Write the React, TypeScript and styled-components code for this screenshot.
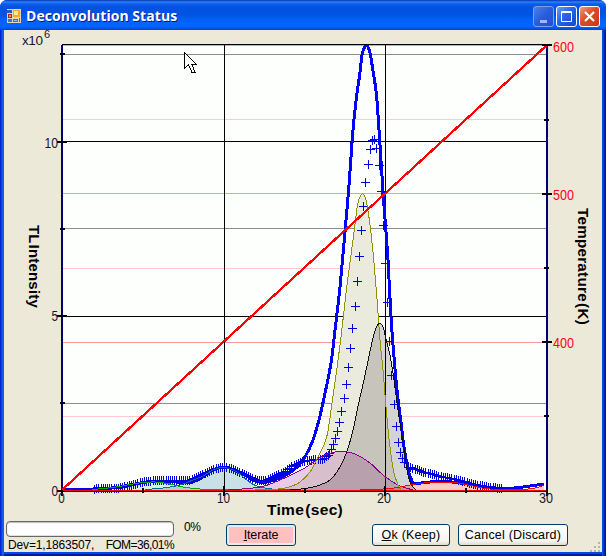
import React from 'react';
import styled, { createGlobalStyle } from 'styled-components';

const GlobalStyle = createGlobalStyle`
  body { margin: 0; background: #fff; overflow: hidden; }
  * { box-sizing: border-box; }
`;

const Window = styled.div`
  width: 606px;
  height: 556px;
  display: flex;
  flex-direction: column;
  border-radius: 7px 7px 0 0;
  overflow: hidden;
  background: linear-gradient(90deg, #0019cf 0, #0831d9 1px, #166aee 3px, #0855dd 4px, #0855dd 602px, #0441d8 603px, #001ea0 605px, #00138c 606px);
  font-family: 'Liberation Sans', Arial, sans-serif;
`;

const TitleBar = styled.header`
  height: 30px;
  flex: none;
  display: flex;
  align-items: center;
  padding: 2px 6px 0 7px;
  background: linear-gradient(180deg, #0831b8 0, #2a82f5 2px, #0a5cec 4px, #0252e0 8px, #0054e3 15px, #0262fa 20px, #0066ff 26px, #005cf0 28px, #0040c8 30px);
`;

const Title = styled.h1`
  margin: 0 auto 0 5px;
  font: bold 14px 'Open Sans', sans-serif;
  line-height: 18px;
  letter-spacing: 0.05px;
  color: #fff;
  text-shadow: 1px 1px 0 #0a1883;
`;

const CaptionButton = styled.button<{ $tone: 'dim' | 'blue' | 'red' }>`
  width: 21px;
  height: 21px;
  margin-left: 2px;
  padding: 0;
  display: grid;
  place-items: center;
  border: 1px solid ${p => (p.$tone === 'dim' ? '#7f9cec' : '#fff')};
  border-radius: 3px;
  background: ${p => p.$tone === 'red'
    ? 'linear-gradient(135deg, #f09a80, #dc4c24 45%, #c63a10)'
    : p.$tone === 'blue'
      ? 'linear-gradient(135deg, #6c9cf8, #2763e8 45%, #1048c8)'
      : 'linear-gradient(135deg, #5080e8, #285cdc 50%, #2050d0)'};
`;

const Client = styled.main`
  flex: 1;
  min-height: 0;
  margin: 0 4px 4px;
  display: flex;
  flex-direction: column;
  background: #ece9d8;
  box-shadow: 0 2px 0 #0848e0, 0 4px 0 #001a9c;
`;

const Chart = styled.svg`
  display: block;
  width: 598px;
  height: 488px;
  flex: none;
  font-family: 'Liberation Sans', Arial, sans-serif;
`;

const Footer = styled.footer`
  height: 34px;
  display: grid;
  grid-template-columns: 168px 52px 70px 76px 78px 8px 110px 1fr;
  padding: 3px 0 0 2px;
  color: #000;
`;

const StatusColumn = styled.div`
  display: flex;
  flex-direction: column;
`;

const Progress = styled.div`
  width: 168px;
  height: 16px;
  flex: none;
  border: 1px solid #686868;
  border-radius: 4px;
  background: #fff;
  box-shadow: inset 0 1px 1px #bebebe, inset 0 -1px 1px #ddd;
`;

const Status = styled.div`
  display: flex;
  justify-content: space-between;
  width: 168px;
  padding-left: 2px;
  font-size: 12px;
  line-height: 16px;
  white-space: nowrap;
  letter-spacing: -0.15px;
`;

const Fit = styled.span`
  letter-spacing: -0.6px;
`;

const Percent = styled.div`
  padding-left: 10px;
  font-size: 12px;
  line-height: 13px;
  letter-spacing: -0.5px;
`;

const Button = styled.button<{ $column: number; $accent?: boolean }>`
  grid-column: ${p => p.$column};
  height: 22px;
  margin-top: 3px;
  padding: 0 0 1px;
  border: 1px solid #003c74;
  border-radius: 3px;
  background: ${p => (p.$accent ? '#ffc0c0' : 'linear-gradient(#fff, #f5f4ef 80%, #dedacb)')};
  box-shadow: ${p => (p.$accent ? 'inset 0 0 0 2px #e6eaf3' : 'none')};
  font: 12.5px 'Liberation Sans', Arial, sans-serif;
  letter-spacing: ${p => (p.$accent ? '-0.1px' : '0.2px')};
  color: #000;
  white-space: nowrap;
`;

const Grip = styled.svg`
  grid-column: 8;
  justify-self: end;
  align-self: end;
  margin: 0 1px 0 0;
`;

const AxisName = styled.text`
  font-weight: bold;
  font-size: 14px;
  letter-spacing: 0.25px;
  word-spacing: -3px;
`;

type Point = [number, number];

const BASE = 490;

const total: Point[] = [[62, 489], [93, 489], [117, 487.5], [130, 485], [143, 482.5], [155, 481.5], [175, 482], [192, 482], [203, 477], [213, 470], [224, 467], [236, 470.5], [247, 476.5], [257, 481.5], [267, 482], [283, 476.5], [296, 468], [306, 455], [313, 440], [319, 420], [324, 398], [331, 363], [335, 330], [339.7, 290], [344, 243], [349, 185], [353, 130], [357, 93], [359.7, 75], [362, 55], [364.3, 48], [367, 45.5], [370, 53], [374, 77], [376.7, 97], [379.5, 137], [382.7, 187], [385.3, 223], [388, 260], [391, 317], [394, 357], [397, 390], [400.7, 420], [404, 447], [408, 469], [411.5, 480], [414.5, 483.5], [430, 482], [452, 482], [470, 484.5], [487, 487], [505, 488.5], [523, 487], [544, 484]];
const olive: Point[] = [[255, 490], [270, 489.5], [283, 488.5], [292, 486], [300, 482], [310, 472], [318, 457], [326.7, 437], [332, 403], [336.7, 370], [341, 337], [345, 302], [348.3, 275], [354.3, 230], [357.5, 205], [360, 197], [362.7, 194], [366, 200], [370.3, 227], [374, 263], [377.3, 303], [380, 340], [383.3, 373], [386, 407], [389.5, 443], [393.3, 470], [398, 485], [401, 490]];
const gray: Point[] = [[290, 490], [305, 488.5], [316.7, 486], [330, 480], [340, 467], [347, 451], [353.3, 429], [358.7, 403], [364, 380], [369, 356], [373, 338], [376, 328], [379.5, 323.5], [383, 327], [386.7, 342], [390, 355], [394, 380], [398, 410], [402.7, 440], [407, 470], [411, 484], [416, 490]];
const purple: Point[] = [[228, 490], [260, 487], [280, 480], [303, 469], [320, 457.5], [331.7, 452.7], [341.7, 451.5], [355, 454], [370, 463], [383, 475], [398, 485], [413, 490]];
const teal: Point[] = [[145, 489.5], [163, 488], [180, 485], [193, 480], [203, 476], [213, 470], [224, 467.5], [236.7, 472], [246.7, 480], [256.7, 486], [271.7, 489], [290, 490]];
const green: Point[] = [[92, 489.5], [113, 487.5], [130, 484.5], [143, 482.5], [155, 482], [167, 483.5], [183, 487], [200, 489], [240, 490]];
const red: Point[] = [[360, 490], [390, 488.5], [413, 484.5], [430, 482.5], [453, 482.3], [473, 486], [490, 489], [528, 489], [544, 485.5]];

const leftTail: Point[] = [[94, 488.5], [117, 488], [130, 485], [143, 481.5], [155, 480], [175, 480.5], [190, 480], [200, 475], [213, 469], [224, 466.5], [236, 470], [247, 475.5], [257, 480], [266, 480], [275, 476], [285, 470.5], [296, 463.5], [306, 460], [316, 459], [323, 459], [329, 454]];
const rightTail: Point[] = [[408, 466.5], [423, 471.5], [440, 476], [457, 479.5], [470, 483], [487, 486.5], [503, 488.5]];
const peakMarks: Point[] = [[329, 453], [331, 449], [333, 444], [335, 438], [337, 431], [339, 422], [341, 411], [344, 398], [346, 384], [348, 367], [350, 348], [352, 328], [355, 306], [357, 281], [359, 256], [361, 230], [363, 206], [365, 182], [368, 164], [370, 149], [372, 140], [374, 139], [376, 148], [379, 165], [381, 191], [383, 225], [385, 263], [387, 302], [389, 341], [391, 375], [394, 404], [396, 426], [398, 442], [400, 452], [402, 458], [404, 462]];

/** Catmull-Rom spline through the points, written as cubic Béziers. */
const spline = (pts: Point[]) => {
  let d = `M${pts[0][0]} ${pts[0][1]}`;
  for (let i = 0; i < pts.length - 1; i++) {
    const a = pts[Math.max(0, i - 1)];
    const b = pts[i];
    const c = pts[i + 1];
    const e = pts[Math.min(pts.length - 1, i + 2)];
    d += `C${b[0] + (c[0] - a[0]) / 6} ${b[1] + (c[1] - a[1]) / 6} ${c[0] - (e[0] - b[0]) / 6} ${c[1] - (e[1] - b[1]) / 6} ${c[0]} ${c[1]}`;
  }
  return d;
};

const area = (pts: Point[]) => `${spline(pts)}L${pts[pts.length - 1][0]} ${BASE}L${pts[0][0]} ${BASE}Z`;

const sample = (pts: Point[], pitch: number): Point[] => {
  const out: Point[] = [];
  let i = 0;
  for (let x = pts[0][0]; x <= pts[pts.length - 1][0]; x += pitch) {
    while (i < pts.length - 2 && pts[i + 1][0] < x) i++;
    const [x0, y0] = pts[i];
    const [x1, y1] = pts[i + 1];
    out.push([Math.round(x), Math.round(y0 + ((y1 - y0) * (x - x0)) / (x1 - x0))]);
  }
  return out;
};

const marks = [...sample(leftTail, 2.17), ...peakMarks, ...sample(rightTail, 2.17)]
  .map(([x, y]) => `M${x - 4} ${y + 0.5}h9M${x + 0.5} ${y - 4}v9`)
  .join('');

const components = [
  { pts: green, stroke: '#00a800', fill: 'rgba(0,170,60,.16)' },
  { pts: teal, stroke: '#006c90', fill: 'rgba(0,100,150,.2)' },
  { pts: purple, stroke: '#880088', fill: 'rgba(150,0,150,.2)' },
  { pts: olive, stroke: '#929200', fill: 'rgba(130,115,35,.14)' },
  { pts: gray, stroke: '#111', fill: 'rgba(55,40,55,.2)' },
  { pts: red, stroke: '#f00', fill: 'rgba(255,0,0,.2)' },
];

const gridRows: [number, string][] = [
  [54, '#8c8c8c'], [141, '#000'], [228, '#8c8c8c'], [316, '#000'], [403, '#8c8c8c'],
  [45, '#ff9999'], [119, '#ffcccc'], [193, '#f99'], [268, '#ffcccc'], [342, '#f99'], [416, '#ffcccc'],
];

const Plot = () => (
  <Chart viewBox="4 30 598 488">
    <g shapeRendering="crispEdges" fill="none">
      <rect x="62" y="45" width="484" height="445" fill="#fdfffc" />
      {gridRows.map(([y, color]) => <path key={y} d={`M62 ${y + 0.5}H546`} stroke={color} />)}
      {components.map(c => <path key={c.stroke} d={area(c.pts)} fill="#fdfffc" />)}
      {components.map(c => <path key={c.stroke} d={area(c.pts)} fill={c.fill} />)}
      <path d="M224.5 45V490M385.5 45V490" stroke="#000" />
      <path d={spline(total)} stroke="#00f" strokeWidth="3" strokeLinejoin="round" />
      <path d={marks} stroke="#0000dc" />
      {components.map(c => <path key={c.stroke} d={spline(c.pts)} stroke={c.stroke} />)}
      <path d="M62 44.5H551" stroke="#000" />
      <path d="M62 45V490M547 45V490" stroke="#00006c" strokeWidth="2" />
      <path d="M57 491H548" stroke="#000" strokeWidth="2" />
      <path d="M62 490.5H546" stroke="#f00" />
      <path d="M62 490L547 45" stroke="#f00" strokeWidth="2.3" />
      <path d="M57 142H67M57 316H67M60 54H65M60 229H65M60 403H65M542 45H552M542 194H552M542 342H552M544 119.5H549M544 268H549M544 416H549M62 490V496M224 486V496M385 486V496M547 490V496M143 488V493M305 488V493M466 488V493" stroke="#000" strokeWidth="2" />
    </g>
    <g fontSize="14">
      <g fill="#151536" textAnchor="end">
        <text x="58" y="148" textLength="13.5" lengthAdjust="spacingAndGlyphs">10</text>
        <text x="58" y="321" textLength="6.5" lengthAdjust="spacingAndGlyphs">5</text>
        <text x="58" y="496" textLength="6.5" lengthAdjust="spacingAndGlyphs">0</text>
        <text x="43" y="45" fontSize="13.5" textLength="21">x10</text>
        <text x="50" y="38" fontSize="11">6</text>
      </g>
      <g fill="#151536" textAnchor="middle">
        <text x="61.5" y="503" textLength="6.5" lengthAdjust="spacingAndGlyphs">0</text>
        <text x="223.5" y="503" textLength="13" lengthAdjust="spacingAndGlyphs">10</text>
        <text x="384" y="503" textLength="14" lengthAdjust="spacingAndGlyphs">20</text>
        <text x="546" y="503" textLength="14" lengthAdjust="spacingAndGlyphs">30</text>
      </g>
      <g fill="#ff0018">
        <text x="553" y="52" textLength="21" lengthAdjust="spacingAndGlyphs">600</text>
        <text x="553" y="200" textLength="21" lengthAdjust="spacingAndGlyphs">500</text>
        <text x="553" y="348" textLength="21" lengthAdjust="spacingAndGlyphs">400</text>
      </g>
      <g fill="#000">
        <AxisName x="267" y="515" textLength="76" lengthAdjust="spacingAndGlyphs">Time (sec)</AxisName>
        <AxisName transform="translate(29 225) rotate(90)" textLength="83" lengthAdjust="spacingAndGlyphs">TL Intensity</AxisName>
        <AxisName transform="translate(578 208) rotate(90)" textLength="117" lengthAdjust="spacingAndGlyphs">Temperature (K)</AxisName>
      </g>
    </g>
    <path d="M184.5 52.5v16l4-4 3.5 8h3l-3-8h4.5z" fill="#fff" stroke="#000" shapeRendering="crispEdges" />
  </Chart>
);

const AppIcon = () => (
  <svg width="14" height="14" viewBox="0 0 14 14" shapeRendering="crispEdges">
    <path fill="#d8d4c8" d="M0 0h14v14H0z" />
    <path fill="#2858c0" d="M0 1h5v3H0z" />
    <path fill="#b82018" d="M1 5h4v4H1z" />
    <path fill="#ef8060" d="M2 6h2v2H2z" />
    <path fill="#f0b010" d="M6 1h7v7H6z" />
    <path fill="#ffe890" d="M7 2h4v4H7z" />
    <path fill="#3c70d8" d="M1 10h4v3H1zM6 10h5v3H6zM12 9h1v4h-1z" />
    <path fill="#90b8f0" d="M7 11h3v1H7z" />
  </svg>
);

export default function App() {
  return (
    <>
      <GlobalStyle />
      <Window>
        <TitleBar>
          <AppIcon />
          <Title>Deconvolution Status</Title>
          <CaptionButton $tone="dim" aria-label="Minimize">
            <svg width="15" height="15"><path d="M4 11h7v3H4z" fill="#9fb8f2" /></svg>
          </CaptionButton>
          <CaptionButton $tone="blue" aria-label="Maximize">
            <svg width="15" height="15" fill="none" stroke="#fff"><path d="M2.5 2.5h10v10h-10zM2 3.5h11" /></svg>
          </CaptionButton>
          <CaptionButton $tone="red" aria-label="Close">
            <svg width="15" height="15"><path d="M3 3l9 9M12 3l-9 9" stroke="#fff" strokeWidth="2.2" /></svg>
          </CaptionButton>
        </TitleBar>
        <Client>
          <Plot />
          <Footer>
            <StatusColumn>
              <Progress />
              <Status><span>Dev=1,1863507,</span><Fit>FOM=36,01%</Fit></Status>
            </StatusColumn>
            <Percent>0%</Percent>
            <Button $column={3} $accent><u>I</u>terate</Button>
            <Button $column={5}><u>O</u>k (Keep)</Button>
            <Button $column={7}>Cancel (Discard)</Button>
            <Grip width="11" height="11" fill="#b8b4a2" shapeRendering="crispEdges">
              <path d="M8 0h2v2H8zM4 4h2v2H4zM8 4h2v2H8zM0 8h2v2H0zM4 8h2v2H4zM8 8h2v2H8z" />
            </Grip>
          </Footer>
        </Client>
      </Window>
    </>
  );
}
